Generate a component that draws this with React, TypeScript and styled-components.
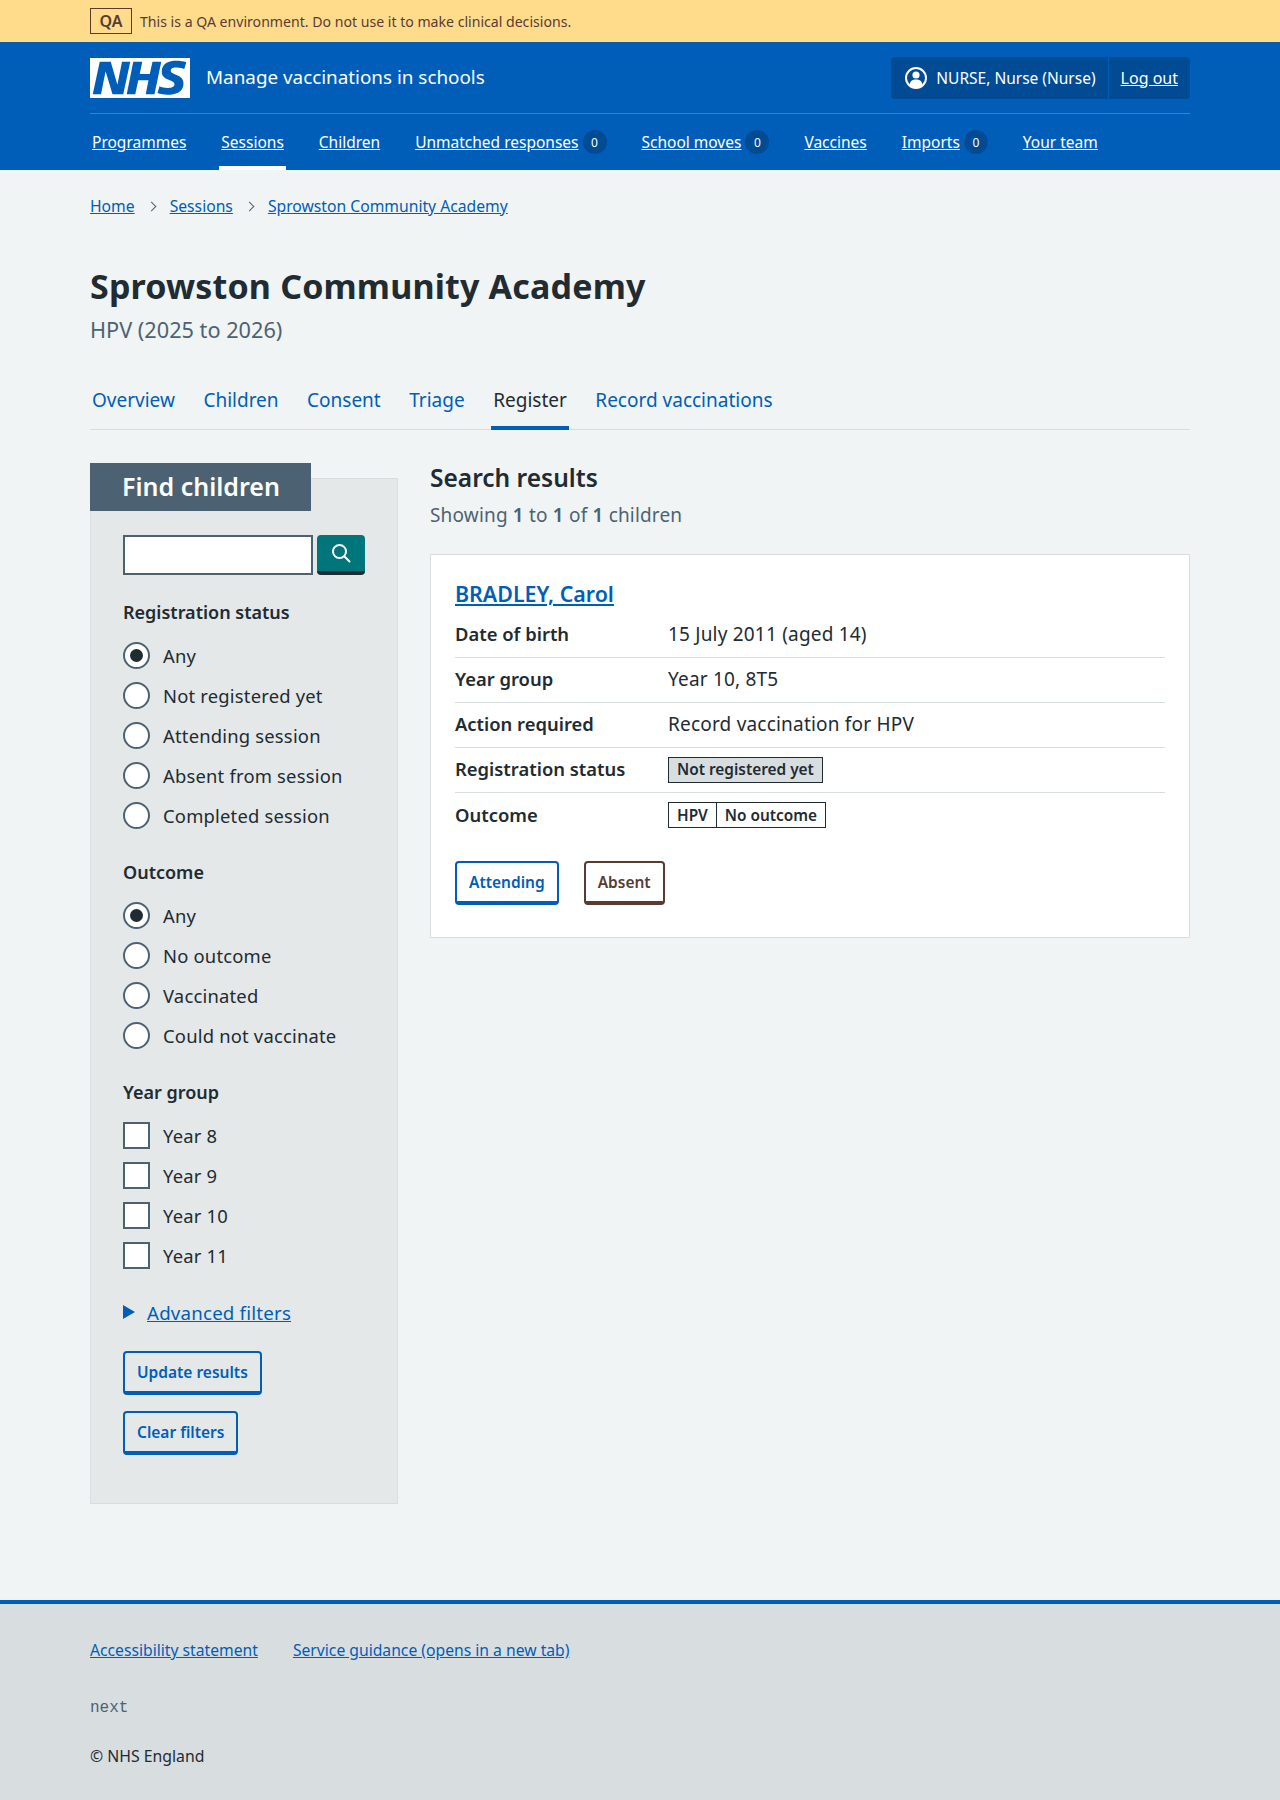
import React from 'react';
import styled, { createGlobalStyle } from 'styled-components';

const blue = '#005eb8';
const darkBlue = '#004b93';
const ink = '#212b32';
const slate = '#4c6272';

const GlobalStyle = createGlobalStyle`
  html, body {
    margin: 0;
    padding: 0;
    background: #f0f4f5;
    color: ${ink};
    font-family: "Noto Sans", "Open Sans", Arial, sans-serif;
    font-size: 19px;
  }
  * { box-sizing: border-box; }
`;

const Wrapper = styled.div`
  width: 1100px;
  margin: 0 auto;
`;

const QaBar = styled.div`
  background: #ffdb8c;
  height: 42px;
  color: #593b34;
  font-size: 14.1px;
`;

const QaInner = styled(Wrapper)`
  display: flex;
  align-items: center;
  gap: 8px;
  height: 100%;
`;

const QaTag = styled.strong`
  display: flex;
  align-items: center;
  justify-content: center;
  width: 42px;
  height: 26px;
  border: 1px solid #593b34;
  font-size: 16px;
  font-weight: 600;
`;

const Header = styled.header`
  background: ${blue};
  height: 128px;
  color: #fff;
`;

const HeaderTop = styled.div`
  display: flex;
  align-items: center;
  justify-content: space-between;
  height: 72px;
  padding-top: 15px;
  padding-bottom: 15px;
  border-bottom: 1px solid #3b7fc6;
`;

const Brand = styled.div`
  display: flex;
  align-items: center;
  gap: 16px;
  font-size: 18.85px;

  span {
    padding-bottom: 2px;
  }
`;

const Logo = styled.svg`
  display: block;
  width: 100px;
  height: 40px;
`;

const UserBox = styled.div`
  display: flex;
  align-items: stretch;
  height: 42px;
  border-radius: 4px;
  background: ${darkBlue};
  font-size: 16px;
`;

const UserName = styled.div`
  display: flex;
  align-items: center;
  gap: 8px;
  padding: 0 12px 0 13px;
  border-right: 1px solid ${blue};
  font-size: 15.5px;
`;

const LogOut = styled.a`
  display: flex;
  align-items: center;
  padding: 0 12px;
  color: #fff;
  text-decoration: underline;
`;

const Nav = styled.nav`
  display: flex;
  height: 56px;
  gap: 35px;
  padding-left: 2px;
  font-size: 15.5px;
`;

const NavItem = styled.a<{ $active?: boolean }>`
  position: relative;
  display: flex;
  align-items: center;
  gap: 4px;
  color: #fff;

  span:first-child {
    text-decoration: underline;
  }

  ${p => p.$active && `
    &::after {
      content: '';
      position: absolute;
      left: -2px;
      right: -2px;
      bottom: 0;
      height: 4px;
      background: #fff;
    }
  `}
`;

const Count = styled.span`
  display: flex;
  align-items: center;
  justify-content: center;
  width: 24px;
  height: 24px;
  border-radius: 50%;
  background: ${darkBlue};
  font-size: 12px;
`;

const Main = styled(Wrapper)`
  padding-bottom: 96px;
`;

const Breadcrumbs = styled.ol`
  display: flex;
  align-items: center;
  height: 24px;
  margin: 24px 0 0;
  padding: 0;
  list-style: none;
  font-size: 15.7px;
`;

const Crumb = styled.li`
  display: flex;
  align-items: center;

  & + &::before {
    content: '';
    width: 6px;
    height: 6px;
    margin: 0 15px 0 13px;
    border-top: 1.5px solid ${slate};
    border-right: 1.5px solid ${slate};
    transform: rotate(45deg);
  }
`;

const Link = styled.a`
  color: ${blue};
  text-decoration: underline;
`;

const Title = styled.h1`
  margin: 46px 0 0;
  font-size: 34px;
  line-height: 44px;
  font-weight: 700;
  letter-spacing: 0.17px;
`;

const Subtitle = styled.p`
  margin: 8px 0 0;
  height: 28px;
  font-size: 21.7px;
  line-height: 28px;
  color: ${slate};
`;

const Tabs = styled.nav`
  display: flex;
  gap: 28.5px;
  height: 58px;
  margin-top: 28px;
  padding-left: 2px;
  border-bottom: 1px solid #d8dde0;
`;

const Tab = styled.a<{ $active?: boolean }>`
  position: relative;
  display: flex;
  align-items: center;
  padding-bottom: 2px;
  color: ${p => (p.$active ? ink : blue)};
  font-size: 19px;

  ${p => p.$active && `
    &::after {
      content: '';
      position: absolute;
      left: -2px;
      right: -2px;
      bottom: -1px;
      height: 4px;
      background: ${blue};
    }
  `}
`;

const Columns = styled.div`
  display: grid;
  grid-template-columns: 308px 1fr;
  gap: 32px;
  margin-top: 33px;
  align-items: start;
`;

const Panel = styled.aside`
  margin-top: 15px;
  padding: 0 32px 48px;
  background: #e4e8e8;
  border: 1px solid #d8dde0;
`;

const PanelHeading = styled.h2`
  display: flex;
  align-items: center;
  width: 221px;
  height: 48px;
  margin: -16px 0 24px -33px;
  padding: 0 0 2px 32px;
  background: ${slate};
  color: #fff;
  font-size: 25px;
  font-weight: 600;
`;

const SearchRow = styled.div`
  display: flex;
  gap: 4px;
`;

const SearchInput = styled.input`
  width: 190px;
  height: 40px;
  padding: 4px;
  border: 2px solid ${slate};
  border-radius: 0;
  background: #fff;
`;

const SearchButton = styled.button`
  display: flex;
  align-items: center;
  justify-content: center;
  width: 48px;
  height: 40px;
  padding: 0;
  border: 0;
  border-bottom: 4px solid ${ink};
  border-radius: 4px;
  background: #00757a;
  color: #fff;
`;

const Group = styled.fieldset`
  margin: 23px 0 0;
  padding: 0;
  border: 0;
`;

const Legend = styled.div`
  height: 28px;
  margin-bottom: 9px;
  font-size: 18px;
  line-height: 28px;
  font-weight: 600;
`;

const Choice = styled.label`
  display: flex;
  align-items: center;
  gap: 13px;
  height: 40px;
  font-size: 18.4px;
  letter-spacing: 0.2px;
`;

const RadioInput = styled.input`
  appearance: none;
  flex: none;
  display: flex;
  align-items: center;
  justify-content: center;
  width: 27px;
  height: 27px;
  margin: 0;
  border: 2px solid ${slate};
  border-radius: 50%;
  background: #fff;

  &:checked::before {
    content: '';
    width: 13px;
    height: 13px;
    border-radius: 50%;
    background: ${ink};
  }
`;

const CheckInput = styled.input`
  appearance: none;
  flex: none;
  width: 27px;
  height: 27px;
  margin: 0;
  border: 2px solid ${slate};
  background: #fff;
`;

const Advanced = styled.div`
  display: flex;
  align-items: center;
  gap: 12px;
  height: 28px;
  margin-top: 23px;
  font-size: 18.7px;
  letter-spacing: 0.2px;

  &::before {
    content: '';
    border-left: 12px solid ${blue};
    border-top: 7px solid transparent;
    border-bottom: 7px solid transparent;
  }
`;

const Button = styled.button<{ $tone?: string }>`
  display: block;
  height: 44px;
  padding: 0 12px;
  border: 2px solid ${p => p.$tone || blue};
  border-bottom-width: 4px;
  border-radius: 4px;
  background: transparent;
  color: ${p => p.$tone || blue};
  font-family: inherit;
  font-size: 15.5px;
  font-weight: 600;
`;

const FilterButtons = styled.div`
  display: flex;
  flex-direction: column;
  align-items: flex-start;
  gap: 16px;
  margin-top: 25px;
`;

const Results = styled.section`
  padding-top: 0;
`;

const ResultsTitle = styled.h2`
  margin: 0;
  height: 30px;
  font-size: 24.5px;
  line-height: 30px;
  font-weight: 600;
`;

const Showing = styled.p`
  margin: 8px 0 0;
  height: 28px;
  font-size: 19px;
  line-height: 28px;
  letter-spacing: 0.17px;
  color: ${slate};

  b {
    font-weight: 600;
  }
`;

const Card = styled.article`
  margin-top: 25px;
  padding: 23px 24px 32px;
  background: #fff;
  border: 1px solid #d8dde0;
`;

const CardName = styled.a`
  display: block;
  height: 35px;
  color: ${blue};
  font-size: 21.4px;
  line-height: 32px;
  font-weight: 600;
  text-decoration: underline;
`;

const Rows = styled.dl`
  margin: 0;
`;

const Row = styled.div<{ $last?: boolean }>`
  display: grid;
  grid-template-columns: 213px 1fr;
  align-items: center;
  height: 45px;
  border-bottom: ${p => (p.$last ? '0' : '1px solid #d8dde0')};
`;

const Term = styled.dt`
  padding-bottom: 3px;
  font-size: 18.4px;
  font-weight: 600;
`;

const Value = styled.dd`
  margin: 0;
  padding-bottom: 2px;
  font-size: 19px;
  letter-spacing: 0.2px;
`;

const Tag = styled.span`
  display: inline-flex;
  align-items: center;
  height: 26px;
  padding: 0 8px;
  border: 1px solid ${ink};
  background: #d8dde0;
  color: ${ink};
  font-size: 15.4px;
  font-weight: 600;
  letter-spacing: 0;
`;

const SplitTag = styled.span`
  display: inline-flex;
  align-items: stretch;
  height: 26px;
  border: 1px solid ${ink};
  font-size: 15.4px;
  font-weight: 600;
  letter-spacing: 0;
`;

const SplitPart = styled.span`
  display: flex;
  align-items: center;
  padding: 0 8px;

  & + & {
    border-left: 1px solid ${ink};
  }
`;

const Actions = styled.div`
  display: flex;
  gap: 25px;
  margin-top: 23px;
`;

const Footer = styled.footer`
  height: 201px;
  border-top: 4px solid ${blue};
  background: #d8dde0;
`;

const FooterLinks = styled.div`
  display: flex;
  gap: 35px;
  padding-top: 34px;
  height: 58px;
  font-size: 15.7px;
  line-height: 24px;
`;

const Version = styled.div`
  margin-top: 34px;
  height: 24px;
  color: ${slate};
  font-family: "Liberation Mono", monospace;
  font-size: 16px;
  line-height: 24px;
`;

const Copyright = styled.div`
  margin-top: 24px;
  height: 24px;
  font-size: 15.8px;
  line-height: 24px;
`;

const NhsLogo = () => (
  <Logo viewBox="0 0 40 16" aria-label="NHS">
    <path fill="#fff" d="M0 0h40v16H0z" />
    <path
      fill={blue}
      d="M3.9 1.5h4.4l2.6 9h.1l1.8-9h3.3l-2.8 13H9l-2.7-9h-.1l-1.8 9H1.1M17.3 1.5h3.6l-1 4.9h4L25 1.5h3.5l-2.7 13h-3.5l1.1-5.6h-4.1l-1.2 5.6h-3.4M37.7 4.4c-.7-.3-1.6-.6-2.9-.6-1.4 0-2.5.2-2.5 1.3 0 1.8 5.1 1.2 5.1 5.1 0 3.6-3.3 4.5-6.4 4.5-1.3 0-2.9-.3-4-.7l.8-2.7c.7.4 2.1.7 3.2.7s2.8-.2 2.8-1.5c0-2.1-5.1-1.3-5.1-5 0-3.4 2.9-4.4 5.8-4.4 1.6 0 3.1.2 4 .6"
    />
  </Logo>
);

const UserIcon = () => (
  <svg width="24" height="24" viewBox="0 0 24 24" aria-hidden="true">
    <circle cx="12" cy="12" r="10" fill="none" stroke="#fff" strokeWidth="2" />
    <circle cx="12" cy="9" r="3.6" fill="#fff" />
    <path fill="#fff" d="M5.6 19c.3-3.6 2.6-5.4 6.4-5.4s6.1 1.8 6.4 5.4A9.6 9.6 0 0 1 12 21.6 9.6 9.6 0 0 1 5.6 19z" />
  </svg>
);

const SearchIcon = () => (
  <svg width="24" height="24" viewBox="0 0 24 24" fill="none" stroke="#fff" strokeWidth="2" aria-hidden="true">
    <circle cx="10.5" cy="10.5" r="6.5" />
    <path strokeLinecap="round" d="M15.5 15.5l5 5" />
  </svg>
);

const navItems = [
  { label: 'Programmes' },
  { label: 'Sessions', active: true },
  { label: 'Children' },
  { label: 'Unmatched responses', count: 0 },
  { label: 'School moves', count: 0 },
  { label: 'Vaccines' },
  { label: 'Imports', count: 0 },
  { label: 'Your team' },
];

const tabs = ['Overview', 'Children', 'Consent', 'Triage', 'Register', 'Record vaccinations'];

const registration = ['Any', 'Not registered yet', 'Attending session', 'Absent from session', 'Completed session'];
const outcomes = ['Any', 'No outcome', 'Vaccinated', 'Could not vaccinate'];
const years = ['Year 8', 'Year 9', 'Year 10', 'Year 11'];

export default function App() {
  return (
    <>
      <GlobalStyle />
      <QaBar>
        <QaInner>
          <QaTag>QA</QaTag>
          <span>This is a QA environment. Do not use it to make clinical decisions.</span>
        </QaInner>
      </QaBar>
      <Header>
        <Wrapper>
          <HeaderTop>
            <Brand>
              <NhsLogo />
              <span>Manage vaccinations in schools</span>
            </Brand>
            <UserBox>
              <UserName>
                <UserIcon />
                <span>NURSE, Nurse (Nurse)</span>
              </UserName>
              <LogOut>Log out</LogOut>
            </UserBox>
          </HeaderTop>
          <Nav>
            {navItems.map(item => (
              <NavItem key={item.label} $active={item.active}>
                <span>{item.label}</span>
                {item.count !== undefined && <Count>{item.count}</Count>}
              </NavItem>
            ))}
          </Nav>
        </Wrapper>
      </Header>
      <Main>
        <Breadcrumbs>
          <Crumb><Link>Home</Link></Crumb>
          <Crumb><Link>Sessions</Link></Crumb>
          <Crumb><Link>Sprowston Community Academy</Link></Crumb>
        </Breadcrumbs>
        <Title>Sprowston Community Academy</Title>
        <Subtitle>HPV (2025 to 2026)</Subtitle>
        <Tabs>
          {tabs.map(tab => (
            <Tab key={tab} $active={tab === 'Register'}>{tab}</Tab>
          ))}
        </Tabs>
        <Columns>
          <Panel>
            <PanelHeading>Find children</PanelHeading>
            <SearchRow>
              <SearchInput type="search" />
              <SearchButton aria-label="Search"><SearchIcon /></SearchButton>
            </SearchRow>
            <Group>
              <Legend>Registration status</Legend>
              {registration.map((label, i) => (
                <Choice key={label}>
                  <RadioInput type="radio" name="registration" defaultChecked={i === 0} />
                  {label}
                </Choice>
              ))}
            </Group>
            <Group>
              <Legend>Outcome</Legend>
              {outcomes.map((label, i) => (
                <Choice key={label}>
                  <RadioInput type="radio" name="outcome" defaultChecked={i === 0} />
                  {label}
                </Choice>
              ))}
            </Group>
            <Group>
              <Legend>Year group</Legend>
              {years.map(label => (
                <Choice key={label}>
                  <CheckInput type="checkbox" />
                  {label}
                </Choice>
              ))}
            </Group>
            <Advanced><Link>Advanced filters</Link></Advanced>
            <FilterButtons>
              <Button>Update results</Button>
              <Button>Clear filters</Button>
            </FilterButtons>
          </Panel>
          <Results>
            <ResultsTitle>Search results</ResultsTitle>
            <Showing>Showing <b>1</b> to <b>1</b> of <b>1</b> children</Showing>
            <Card>
              <CardName>BRADLEY, Carol</CardName>
              <Rows>
                <Row>
                  <Term>Date of birth</Term>
                  <Value>15 July 2011 (aged 14)</Value>
                </Row>
                <Row>
                  <Term>Year group</Term>
                  <Value>Year 10, 8T5</Value>
                </Row>
                <Row>
                  <Term>Action required</Term>
                  <Value>Record vaccination for HPV</Value>
                </Row>
                <Row>
                  <Term>Registration status</Term>
                  <Value><Tag>Not registered yet</Tag></Value>
                </Row>
                <Row $last>
                  <Term>Outcome</Term>
                  <Value>
                    <SplitTag>
                      <SplitPart>HPV</SplitPart>
                      <SplitPart>No outcome</SplitPart>
                    </SplitTag>
                  </Value>
                </Row>
              </Rows>
              <Actions>
                <Button>Attending</Button>
                <Button $tone="#593b34">Absent</Button>
              </Actions>
            </Card>
          </Results>
        </Columns>
      </Main>
      <Footer>
        <Wrapper>
          <FooterLinks>
            <Link>Accessibility statement</Link>
            <Link>Service guidance (opens in a new tab)</Link>
          </FooterLinks>
          <Version>next</Version>
          <Copyright>© NHS England</Copyright>
        </Wrapper>
      </Footer>
    </>
  );
}
